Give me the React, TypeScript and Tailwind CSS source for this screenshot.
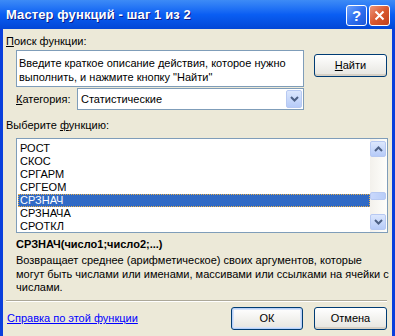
import React from 'react';

const font = { fontFamily: '"Liberation Sans", Arial, sans-serif' };

const functions = ['РОСТ', 'СКОС', 'СРГАРМ', 'СРГЕОМ', 'СРЗНАЧ', 'СРЗНАЧА', 'СРОТКЛ'];

function Chevron({ up = false }: { up?: boolean }) {
  return (
    <svg width="9" height="6" viewBox="0 0 9 6" className="block">
      <path
        d={up ? 'M1 5 L4.5 1.5 L8 5' : 'M1 1 L4.5 4.5 L8 1'}
        fill="none"
        stroke="#4d6185"
        strokeWidth="2"
      />
    </svg>
  );
}

function ArrowButton({ up = false, className = '' }: { up?: boolean; className?: string }) {
  return (
    <div
      className={`flex items-center justify-center rounded-[2px] border border-[#b7c9f2] bg-gradient-to-b from-[#dce7fd] to-[#b6cbf8] ${className}`}
    >
      <Chevron up={up} />
    </div>
  );
}

function XpButton({ children, isDefault = false, className = '' }: { children: React.ReactNode; isDefault?: boolean; className?: string }) {
  return (
    <button
      className={`flex h-[23px] items-center justify-center rounded-[3px] border border-[#003c74] bg-gradient-to-b from-white to-[#e6e5df] text-[11px] text-black ${
        isDefault ? 'shadow-[inset_0_0_0_1px_#b9d1f7,inset_0_0_0_2px_#d6e3f9]' : 'shadow-[inset_0_-2px_0_#d6d0c5]'
      } ${className}`}
    >
      {children}
    </button>
  );
}

export default function App() {
  return (
    <div className="flex h-[336px] w-[395px] flex-col overflow-hidden bg-[#0a3fdc]" style={font}>
      {/* title bar */}
      <div className="flex h-[29px] shrink-0 items-center bg-gradient-to-b from-[#3d8bf6] via-[#0a5ef3] to-[#0347d6] pl-[6px] pr-[5px] pt-[1px]">
        <span className="flex-1 text-[13px] font-bold tracking-[0.1px] text-white [text-shadow:1px_1px_0_#0a1c8a]">
          Мастер функций - шаг 1 из 2
        </span>
        <div className="flex gap-[2px]">
          <div className="flex h-[21px] w-[21px] items-center justify-center rounded-[3px] border border-white bg-gradient-to-br from-[#6fa2fb] via-[#2f6ff0] to-[#1c57d8] text-[15px] font-bold leading-none text-white">
            ?
          </div>
          <div className="flex h-[21px] w-[21px] items-center justify-center rounded-[3px] border border-white bg-gradient-to-br from-[#eb9479] via-[#d9582e] to-[#c0401d]">
            <svg width="11" height="11" viewBox="0 0 11 11">
              <path d="M1.5 1.5 L9.5 9.5 M9.5 1.5 L1.5 9.5" stroke="white" strokeWidth="2" />
            </svg>
          </div>
        </div>
      </div>

      {/* body */}
      <div className="mx-[3px] flex flex-1 flex-col bg-[#ece9d8] pt-[6px] text-[11px] leading-[13px] text-black">
        <div className="ml-[3px]">
          <u>П</u>оиск функции:
        </div>

        <div className="mt-[2px] flex items-start">
          <div className="ml-[13px] h-[37px] w-[288px] border border-[#7f9db9] bg-white px-[2px] pt-[5px] leading-[14px]">
            Введите краткое описание действия, которое нужно
            <br />
            выполнить, и нажмите кнопку "Найти"
          </div>
          <XpButton className="ml-[10px] mt-[4px] w-[73px]">
            <span>
              <u>Н</u>айти
            </span>
          </XpButton>
        </div>

        <div className="mt-[1px] flex items-center">
          <span className="ml-[13px] w-[61px]">
            <u>К</u>атегория:
          </span>
          <div className="flex h-[22px] w-[227px] items-center border border-[#7f9db9] bg-white">
            <span className="flex-1 pl-[3px]">Статистические</span>
            <ArrowButton className="mr-[1px] h-[18px] w-[16px]" />
          </div>
        </div>

        <div className="ml-[3px] mt-[9px]">
          Выберите <u>ф</u>ункцию:
        </div>

        <div className="ml-[13px] mt-[6px] flex h-[95px] w-[372px] border border-[#7f9db9] bg-white">
          <div className="flex-1 overflow-hidden pl-[1px] pt-[3px]">
            {functions.map((fn) => (
              <div
                key={fn}
                className={`h-[13px] pl-[2px] leading-[13px] ${
                  fn === 'СРЗНАЧ' ? 'bg-[#316ac5] text-white outline outline-1 -outline-offset-1 outline-dotted outline-[#e8b04a]' : ''
                }`}
              >
                {fn}
              </div>
            ))}
          </div>
          <div className="flex w-[17px] flex-col bg-gradient-to-r from-[#f3f1ec] to-[#fefefb] py-[2px] pr-[1px]">
            <ArrowButton up className="h-[16px] w-[16px]" />
            <div className="flex-1 pt-[35px]">
              <div className="h-[8px] w-[16px] rounded-[2px] border border-[#b7c9f2] bg-gradient-to-r from-[#c9d8fc] to-[#b8cdf8]" />
            </div>
            <ArrowButton className="h-[16px] w-[16px]" />
          </div>
        </div>

        <div className="ml-[13px] mt-[5px] font-bold">СРЗНАЧ(число1;число2;...)</div>
        <div className="ml-[13px] mt-[3px] leading-[13.5px]">
          Возвращает среднее (арифметическое) своих аргументов, которые
          <br />
          могут быть числами или именами, массивами или ссылками на ячейки с
          <br />
          числами.
        </div>

        <div className="ml-[3px] mr-[5px] mt-[5.5px] border-t border-b border-t-[#aca899] border-b-white" />

        <div className="mt-[5px] flex items-center">
          <a href="#" className="ml-[4px] flex-1 text-[#0000ff] underline">
            Справка по этой функции
          </a>
          <XpButton isDefault className="w-[72px]">
            ОК
          </XpButton>
          <XpButton className="ml-[11px] mr-[5px] w-[73px]">Отмена</XpButton>
        </div>
      </div>
    </div>
  );
}
